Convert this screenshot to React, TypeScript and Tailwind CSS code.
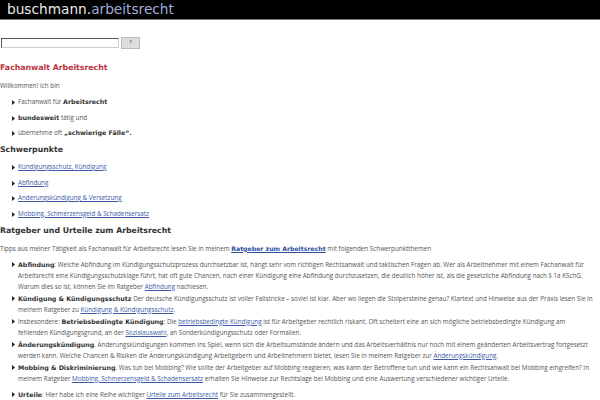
import React from "react";

const Tri = () => (
  <svg width="3" height="5" viewBox="0 0 3 5" className="absolute left-[-6px] top-[3px]">
    <path d="M0 0 L3 2.5 L0 5 Z" fill="#222" />
  </svg>
);

const A = ({ children }: { children: React.ReactNode }) => (
  <a className="text-[#3a5aa8] underline">{children}</a>
);

const B = ({ children }: { children: React.ReactNode }) => (
  <b className="font-bold text-[#333] font-['DejaVu_Sans',sans-serif] text-[6.3px]">{children}</b>
);

const Li = ({ children, cls }: { children: React.ReactNode; cls: string }) => (
  <li className={"relative " + cls}>
    <Tri />
    {children}
  </li>
);

export default function App() {
  return (
    <div className="w-[600px] h-[400px] overflow-hidden bg-white font-['Open_Sans',sans-serif] text-[6.3px] text-[#555]">
      <div className="h-[20px] bg-black border-b border-[#777] pl-[7px] flex items-center">
        <span className="font-['DejaVu_Sans',sans-serif] text-[13.7px] leading-none">
          <span className="text-[#e8e8e8]">buschmann.</span>
          <span className="text-[#a3abd8]">arbeitsrecht</span>
        </span>
      </div>
      <div className="flex items-center mt-[17px] pl-[1px] gap-[2px]">
        <div className="w-[118px] h-[10px] border border-t-[#555] border-l-[#555] border-r-[#ccc] border-b-[#ccc] bg-white" />
        <div className="w-[19px] h-[12px] bg-[#ddd] border border-[#bbb] flex items-center justify-center text-[5px] text-[#333] font-['DejaVu_Sans',sans-serif]">?</div>
      </div>
      <div className="pr-[4px]">
        <h1 className="mt-[13px] leading-[12px] font-['DejaVu_Sans',sans-serif] font-bold text-[7.8px] text-[#b8323e]">Fachanwalt Arbeitsrecht</h1>
        <p className="mt-[7px] leading-[10px]">Willkommen! Ich bin</p>
        <ul className="mt-[6px] pl-[18px] leading-[10px]">
          <Li cls="mb-[5.5px]">Fachanwalt für <B>Arbeitsrecht</B></Li>
          <Li cls="mb-[5.5px]"><B>bundesweit</B> tätig und</Li>
          <Li cls="">übernehme oft <B>„schwierige Fälle“.</B></Li>
        </ul>
        <h2 className="mt-[6px] leading-[12px] font-['DejaVu_Sans',sans-serif] font-bold text-[7.8px] text-[#333]">Schwerpunkte</h2>
        <ul className="mt-[6px] pl-[18px] leading-[10px]">
          <Li cls="mb-[5.5px]"><A>Kündigungsschutz, Kündigung</A></Li>
          <Li cls="mb-[5.5px]"><A>Abfindung</A></Li>
          <Li cls="mb-[5.5px]"><A>Änderungskündigung &amp; Versetzung</A></Li>
          <Li cls=""><A>Mobbing, Schmerzensgeld &amp; Schadensersatz</A></Li>
        </ul>
        <h2 className="mt-[6px] leading-[12px] font-['DejaVu_Sans',sans-serif] font-bold text-[7.8px] text-[#333]">Ratgeber und Urteile zum Arbeitsrecht</h2>
        <p className="mt-[6px] leading-[11px]">
          Tipps aus meiner Tätigkeit als Fachanwalt für Arbeitsrecht lesen Sie in meinem{" "}
          <a className="text-[#2c4f9c] underline font-bold font-['DejaVu_Sans',sans-serif] text-[6.2px]">Ratgeber zum Arbeitsrecht</a>{" "}
          mit folgenden Schwerpunktthemen
        </p>
        <ul className="mt-[5px] pl-[18px] leading-[11px]">
          <Li cls="mb-[1px]">
            <B>Abfindung</B>: Welche Abfindung im Kündigungsschutzprozess durchsetzbar ist, hängt sehr vom richtigen Rechtsanwalt und taktischen Fragen ab. Wer als Arbeitnehmer mit einem Fachanwalt für Arbeitsrecht eine Kündigungsschutzklage führt, hat oft gute Chancen, nach einer Kündigung eine Abfindung durchzusetzen, die deutlich höher ist, als die gesetzliche Abfindung nach § 1a KSchG. Warum dies so ist, können Sie im Ratgeber <A>Abfindung</A> nachlesen.
          </Li>
          <Li cls="mb-[1px]">
            <B>Kündigung &amp; Kündigungsschutz</B> Der deutsche Kündigungsschutz ist voller Fallstricke – soviel ist klar. Aber wo liegen die Stolpersteine genau? Klartext und Hinweise aus der Praxis lesen Sie in meinem Ratgeber zu <A>Kündigung &amp; Kündigungsschutz</A>.
          </Li>
          <Li cls="mb-[1px]">
            Insbesondere: <B>Betriebsbedingte Kündigung</B>: Die <A>betriebsbedingte Kündigung</A> ist für Arbeitgeber rechtlich riskant. Oft scheitert eine an sich mögliche betriebsbedingte Kündigung am fehlenden Kündigungsgrund, an der <A>Sozialauswahl</A>, an Sonderkündigungsschutz oder Formalien.
          </Li>
          <Li cls="mb-[1px]">
            <B>Änderungskündigung</B>. Änderungskündigungen kommen ins Spiel, wenn sich die Arbeitsumstände ändern und das Arbeitsverhältnis nur noch mit einem geänderten Arbeitsvertrag fortgesetzt werden kann. Welche Chancen &amp; Risiken die Änderungskündigung Arbeitgebern und Arbeitnehmern bietet, lesen Sie in meinem Ratgeber zur <A>Änderungskündigung</A>.
          </Li>
          <Li cls="mb-[5px]">
            <B>Mobbing &amp; Diskriminierung</B>. Was tun bei Mobbing? Wie sollte der Arbeitgeber auf Mobbing reagieren, was kann der Betroffene tun und wie kann ein Rechtsanwalt bei Mobbing eingreifen? In meinem Ratgeber <A>Mobbing, Schmerzensgeld &amp; Schadensersatz</A> erhalten Sie Hinweise zur Rechtslage bei Mobbing und eine Auswertung verschiedener wichtiger Urteile.
          </Li>
          <Li cls="">
            <B>Urteile</B>: Hier habe ich eine Reihe wichtiger <A>Urteile zum Arbeitsrecht</A> für Sie zusammengestellt.
          </Li>
        </ul>
      </div>
    </div>
  );
}
